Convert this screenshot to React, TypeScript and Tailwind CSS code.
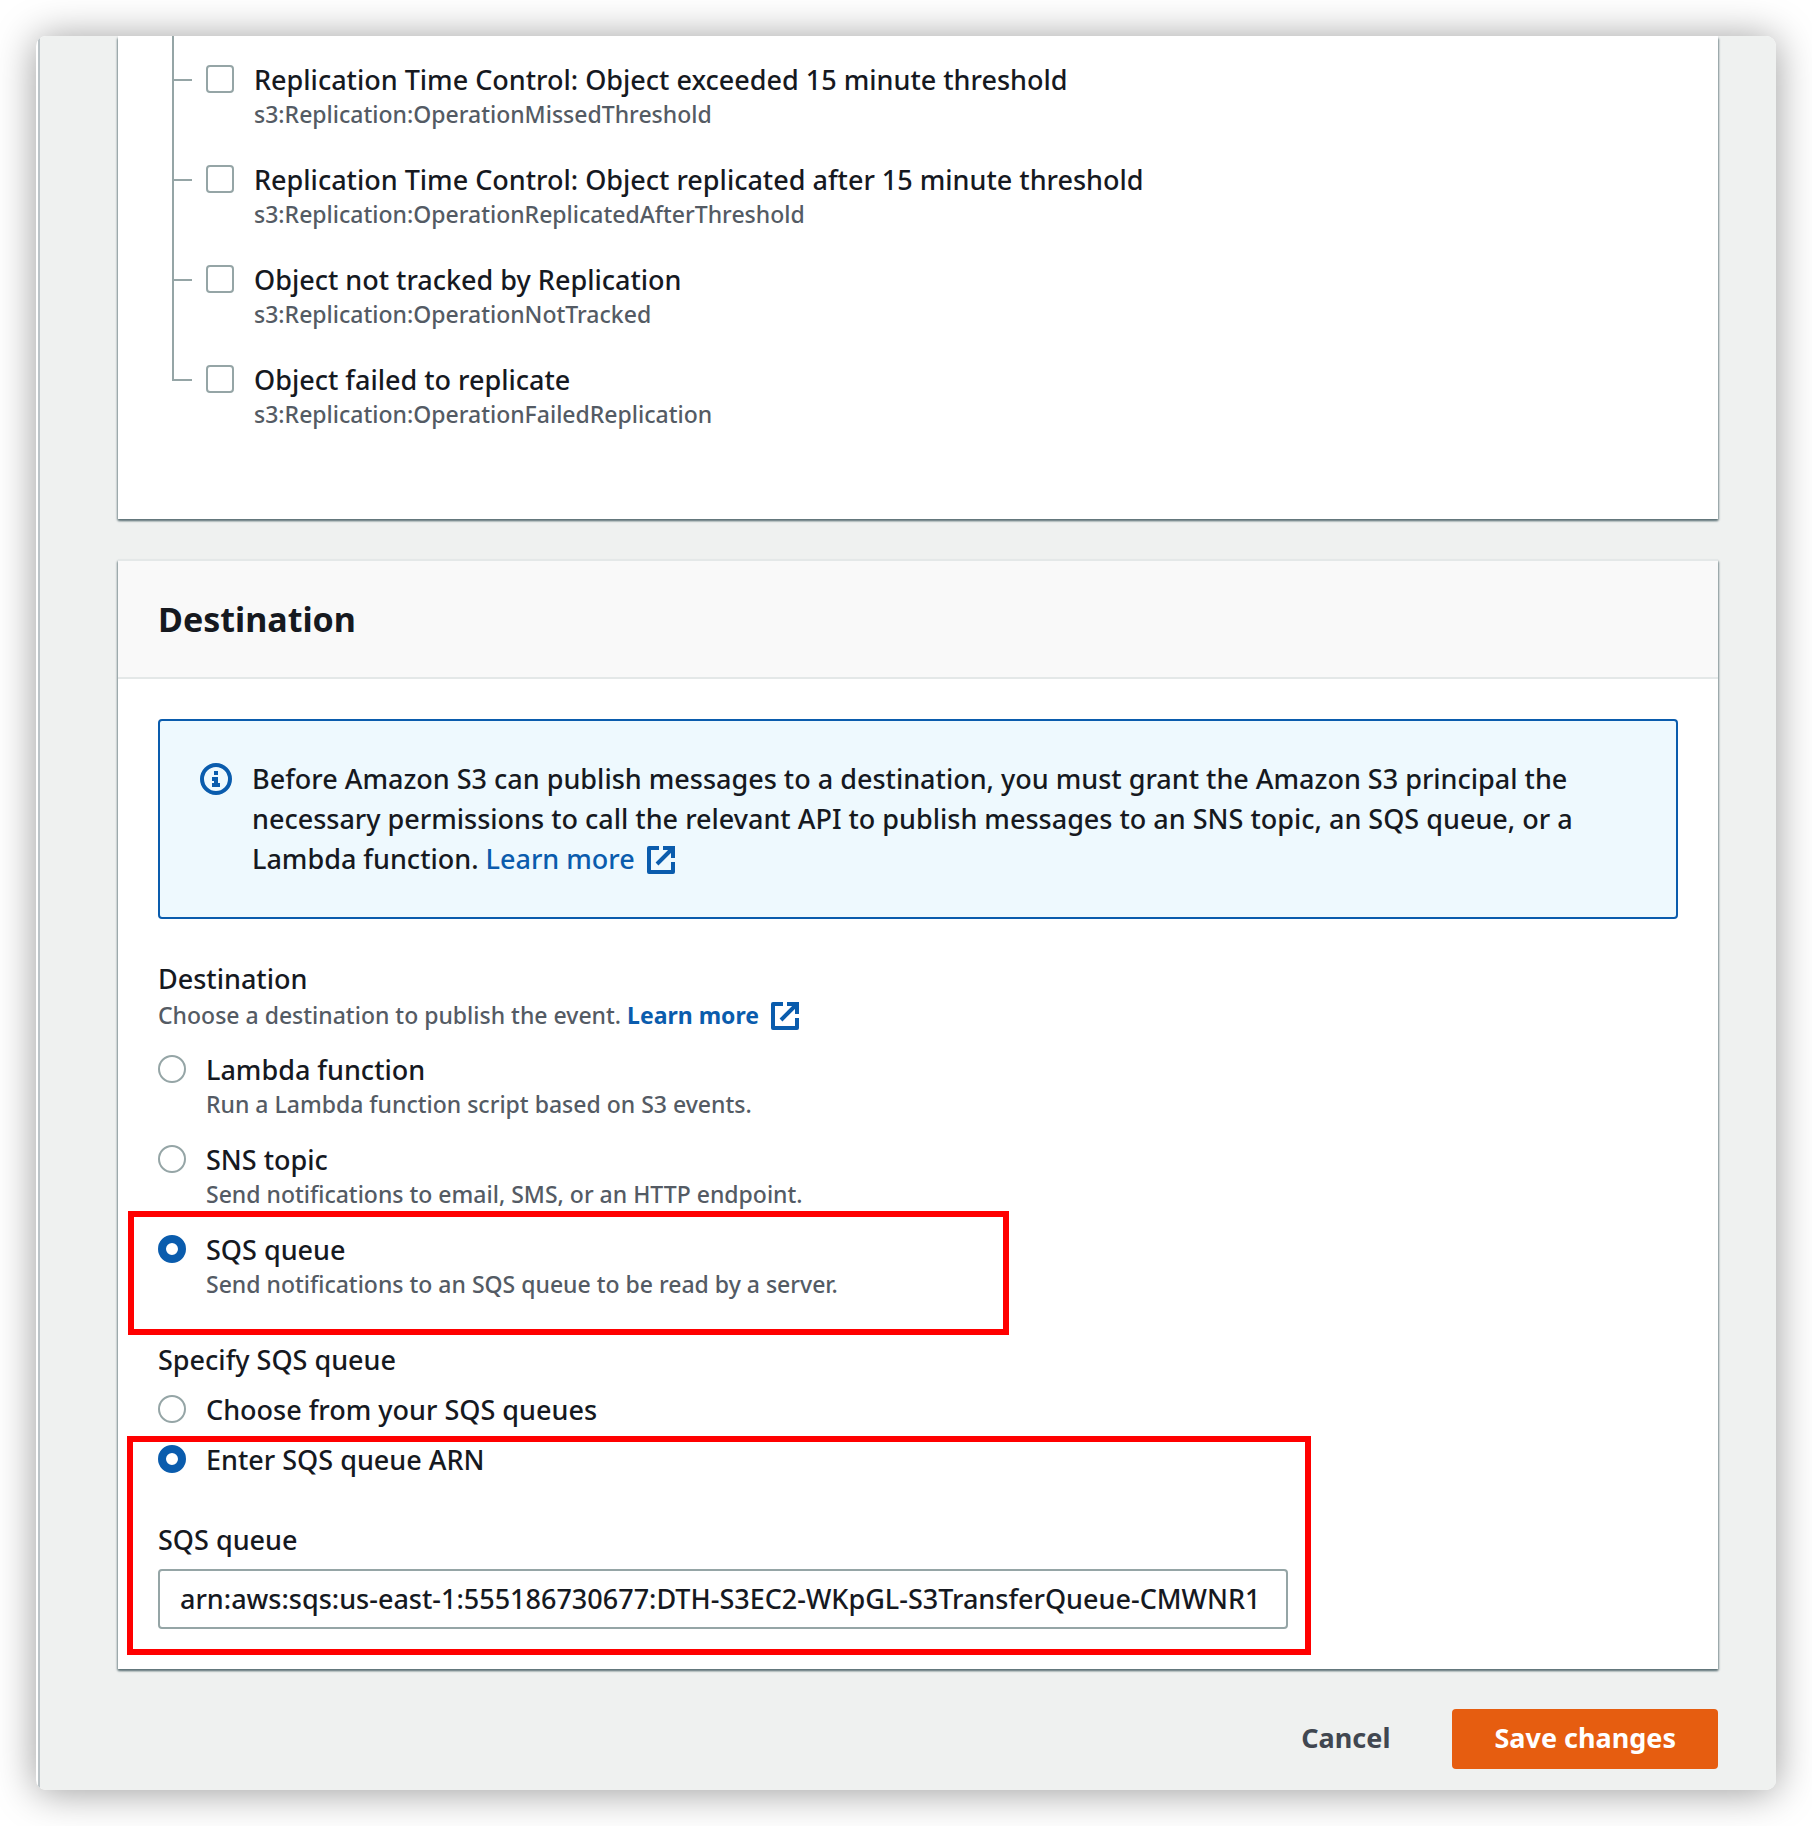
import { useState } from "react";
import type { ReactNode } from "react";

const replicationEvents = [
  { title: "Replication Time Control: Object exceeded 15 minute threshold", event: "s3:Replication:OperationMissedThreshold" },
  { title: "Replication Time Control: Object replicated after 15 minute threshold", event: "s3:Replication:OperationReplicatedAfterThreshold" },
  { title: "Object not tracked by Replication", event: "s3:Replication:OperationNotTracked" },
  { title: "Object failed to replicate", event: "s3:Replication:OperationFailedReplication" },
];

const destinations = [
  { id: "lambda", title: "Lambda function", description: "Run a Lambda function script based on S3 events." },
  { id: "sns", title: "SNS topic", description: "Send notifications to email, SMS, or an HTTP endpoint." },
  { id: "sqs", title: "SQS queue", description: "Send notifications to an SQS queue to be read by a server." },
];

const queueSources = [
  { id: "choose", title: "Choose from your SQS queues" },
  { id: "arn", title: "Enter SQS queue ARN" },
];

function ExternalIcon() {
  return (
    <svg viewBox="0 0 28 28" className="mb-1 ml-3 inline-block size-7 align-middle" fill="none" stroke="currentColor" strokeWidth="4" aria-hidden="true">
      <path d="M12 2H2v24h24V16" strokeLinejoin="round" />
      <path d="M16 2h10v10M25 3 10 18" />
    </svg>
  );
}

function InfoIcon() {
  return (
    <svg viewBox="0 0 32 32" className="size-8 shrink-0" fill="none" aria-hidden="true">
      <circle cx="16" cy="16" r="14" stroke="currentColor" strokeWidth="4" />
      <path d="M14 8h4v4h-4zM12 14h6v6h2v4h-8v-4h2v-2h-2z" fill="currentColor" />
    </svg>
  );
}

function Radio(props: {
  id: string;
  name: string;
  title: string;
  description?: string;
  checked: boolean;
  onSelect: () => void;
}) {
  return (
    <div className="flex gap-5">
      <input
        type="radio"
        id={props.id}
        name={props.name}
        checked={props.checked}
        onChange={props.onSelect}
        className="mt-[5px] size-7 shrink-0 appearance-none rounded-full border-2 border-[#95a5a6] bg-white checked:border-[8px] checked:border-[#0a5cad]"
      />
      <label htmlFor={props.id}>
        <span className="block leading-10">{props.title}</span>
        {props.description && <span className="block pb-0.5 text-[23px] leading-7 text-[#545b64]">{props.description}</span>}
      </label>
    </div>
  );
}

function Highlight({ className }: { className: string }) {
  return <div aria-hidden="true" className={"pointer-events-none absolute border-[6px] border-[#ff0000] " + className} />;
}

function Card({ children }: { children: ReactNode }) {
  return (
    <section className="bg-white shadow-[0_2px_2px_0_#5f7377,2px_2px_2px_-1px_#a4b0b3,-2px_2px_2px_-1px_#a4b0b3]">{children}</section>
  );
}

export default function App() {
  const [destination, setDestination] = useState("sqs");
  const [source, setSource] = useState("arn");
  const [arn, setArn] = useState("arn:aws:sqs:us-east-1:555186730677:DTH-S3EC2-WKpGL-S3TransferQueue-CMWNR1");

  return (
    <div className="bg-white p-9 font-['Noto_Sans',sans-serif] text-[27px] font-medium text-[#16191f]">
      <main className="overflow-hidden rounded-[10px] bg-white pl-0.5 shadow-[0_2px_40px_rgba(0,0,0,0.4)]">
        <div className="border-l-2 border-[#bcc4c8] bg-[#eff1f0] pr-[58px] pb-[21px] pl-[78px]">
          <Card>
            <ul className="pb-[83px] pl-[54px]">
              {replicationEvents.map((item, i) => (
                <li key={item.event} className="flex">
                  <div className="w-[34px] shrink-0" aria-hidden="true">
                    <div className="h-[45px] w-5 border-b-2 border-l-2 border-[#95a5a6]" />
                    {i < replicationEvents.length - 1 && <div className="h-[55px] border-l-2 border-[#95a5a6]" />}
                  </div>
                  <div className="flex gap-5 pt-6">
                    <input
                      type="checkbox"
                      id={"event-" + i}
                      className="mt-[5px] size-7 shrink-0 appearance-none rounded-[4px] border-2 border-[#95a5a6] bg-white checked:bg-[#0a5cad]"
                    />
                    <label htmlFor={"event-" + i} className="pb-2">
                      <span className="block leading-10">{item.title}</span>
                      <span className="block text-[23px] leading-7 text-[#545b64]">{item.event}</span>
                    </label>
                  </div>
                </li>
              ))}
            </ul>
          </Card>

          <div className="mt-10">
            <Card>
              <header className="border-y-2 border-[#e4e8e8] bg-[#f9f9f9] px-10 py-9">
                <h2 className="text-[34px] leading-[44px] font-bold">Destination</h2>
              </header>
              <div className="px-10 pt-10 pb-10">
                <div className="flex gap-5 rounded-[4px] border-2 border-[#0a5cad] bg-[#eef9fe] px-10 py-[38px]">
                  <span className="pt-1 text-[#0a5cad]">
                    <InfoIcon />
                  </span>
                  <p className="pr-10 leading-10">
                    Before Amazon S3 can publish messages to a destination, you must grant the Amazon S3 principal the necessary
                    permissions to call the relevant API to publish messages to an SNS topic, an SQS queue, or a Lambda function.{" "}
                    <a href="#permissions" className="text-[#0a5cad]">
                      Learn more
                      <ExternalIcon />
                    </a>
                  </p>
                </div>

                <fieldset className="mt-10">
                  <legend className="leading-10">Destination</legend>
                  <p className="text-[23px] leading-8 text-[#545b64]">
                    Choose a destination to publish the event.{" "}
                    <a href="#destinations" className="font-bold text-[#0a5cad]">
                      Learn more
                      <ExternalIcon />
                    </a>
                  </p>
                  <div className="mt-4 flex flex-col gap-5">
                    {destinations.map((item) => (
                      <div key={item.id} className="relative">
                        <Radio
                          id={item.id}
                          name="destination"
                          title={item.title}
                          description={item.description}
                          checked={destination === item.id}
                          onSelect={() => setDestination(item.id)}
                        />
                        {item.id === "sqs" && <Highlight className="-top-[19px] -left-[30px] h-[124px] w-[881px] max-w-full" />}
                      </div>
                    ))}
                  </div>
                </fieldset>

                <fieldset className="mt-10">
                  <legend className="leading-10">Specify SQS queue</legend>
                  <div className="mt-2.5">
                    <Radio
                      id={queueSources[0].id}
                      name="source"
                      title={queueSources[0].title}
                      checked={source === "choose"}
                      onSelect={() => setSource("choose")}
                    />
                  </div>
                </fieldset>

                <div className="relative mt-2.5">
                  <Radio
                    id={queueSources[1].id}
                    name="source"
                    title={queueSources[1].title}
                    checked={source === "arn"}
                    onSelect={() => setSource("arn")}
                  />
                  <label htmlFor="queue-arn" className="mt-10 block leading-10">
                    SQS queue
                  </label>
                  <input
                    id="queue-arn"
                    type="text"
                    value={arn}
                    onChange={(e) => setArn(e.target.value)}
                    className="mt-[9px] block h-[60px] w-[1130px] max-w-full rounded-[4px] border-2 border-[#95a5a6] bg-white px-5"
                  />
                  <Highlight className="-top-1 -bottom-[26px] -left-[31px] w-[1184px] max-w-full" />
                </div>
              </div>
            </Card>
          </div>

          <div className="mt-10 flex justify-end gap-5 font-bold">
            <button type="button" className="h-[60px] px-[42px] text-[#414750]">
              Cancel
            </button>
            <button type="button" className="h-[60px] rounded-[4px] bg-[#e65d10] px-[42px] text-white">
              Save changes
            </button>
          </div>
        </div>
      </main>
    </div>
  );
}
